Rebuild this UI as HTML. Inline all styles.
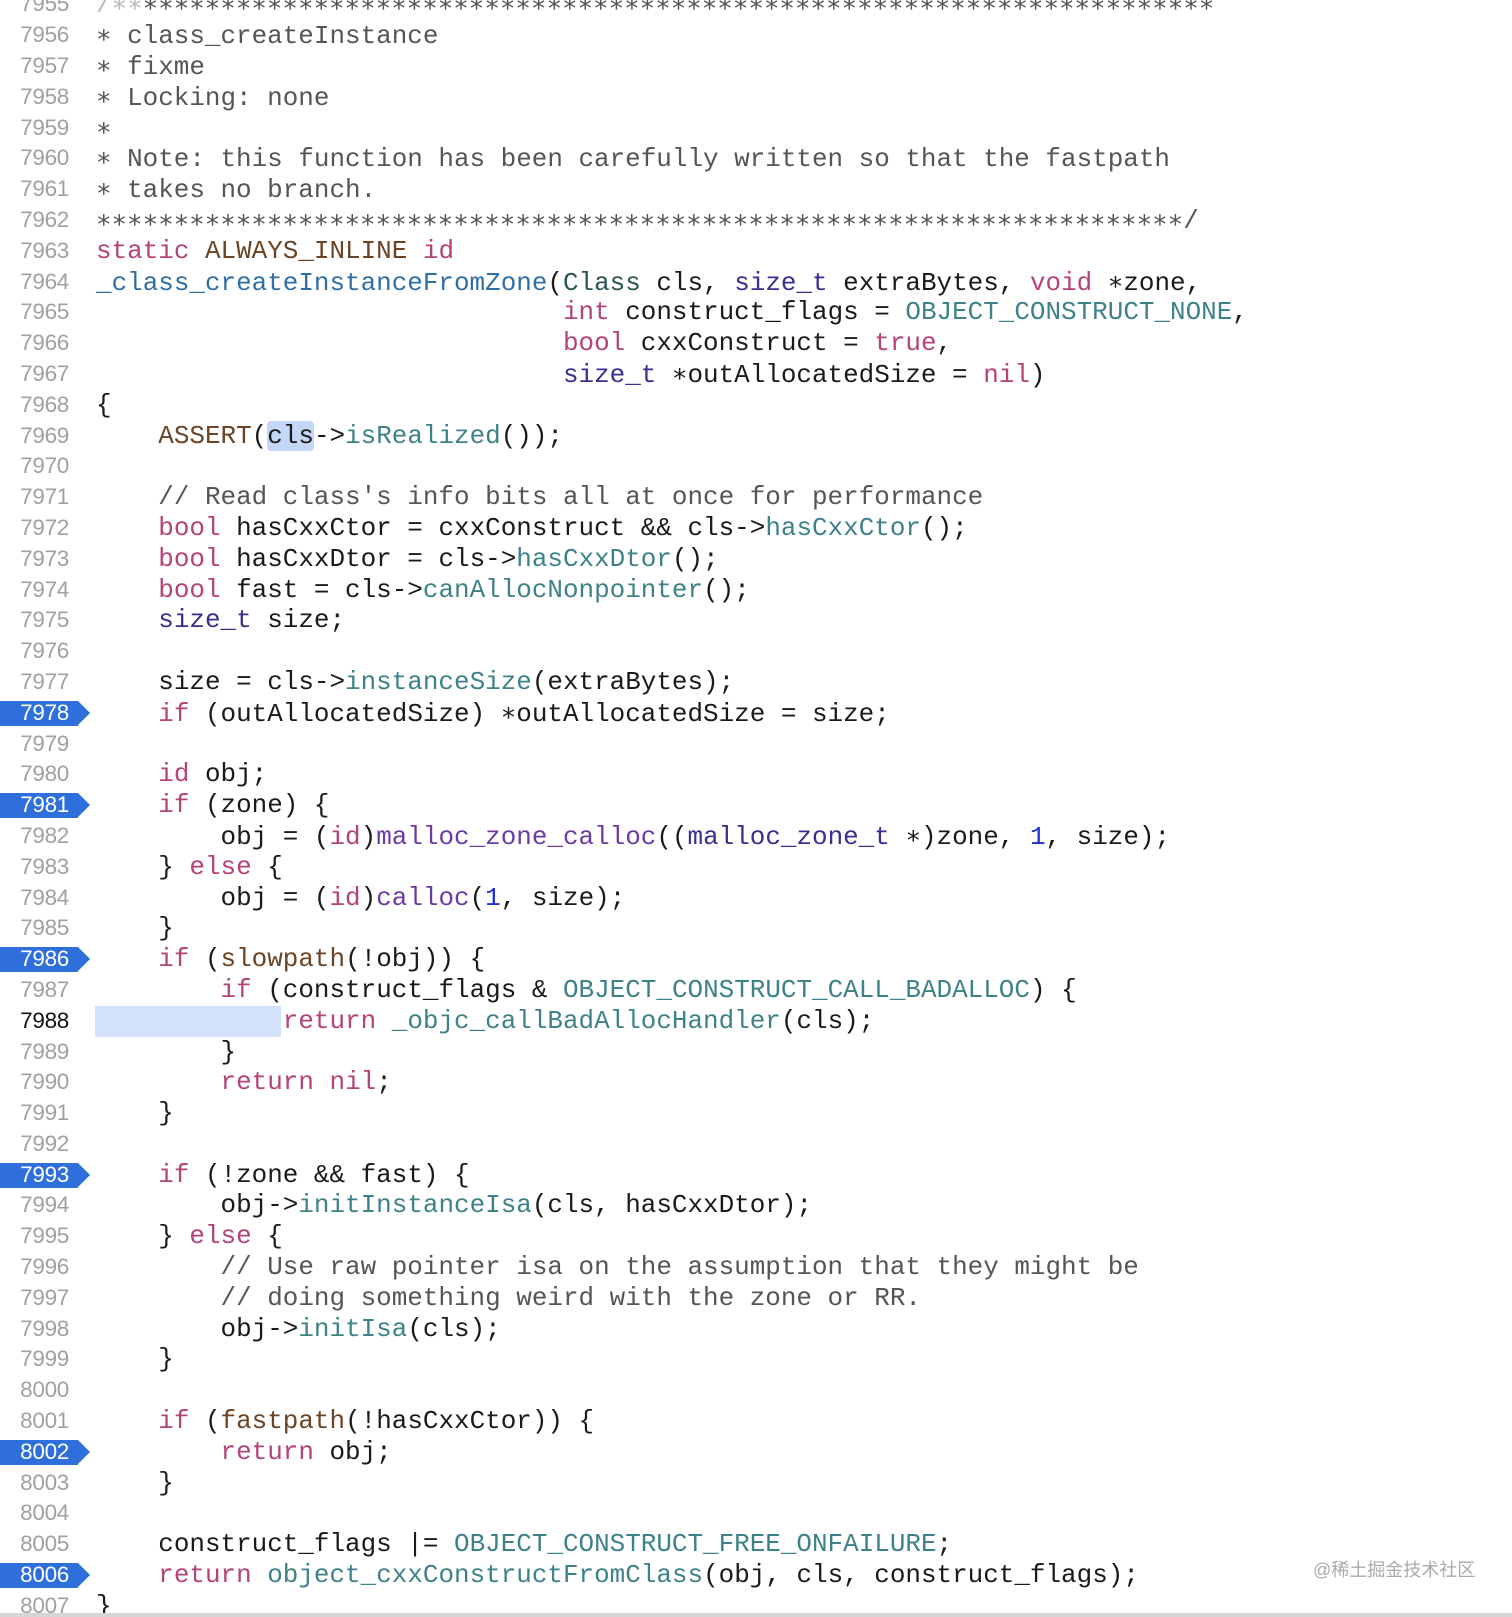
<!DOCTYPE html>
<html><head><meta charset="utf-8"><style>
html,body{margin:0;padding:0;background:#fff;width:1512px;height:1617px;overflow:hidden;position:relative}
#c{position:absolute;left:0;top:-10.6px;width:1512px}
.l{height:30.8px;position:relative;white-space:pre}
.n{position:absolute;right:1443px;top:0;line-height:30.8px;font-family:"Liberation Sans",sans-serif;font-size:22.5px;color:#a0a0a0;text-align:right;letter-spacing:-0.3px}
.n.cur{color:#111}
.bp{position:absolute;left:0;top:3px;width:78px;height:25px;background:#2f6fdc}
.bp:after{content:"";position:absolute;left:78px;top:0;border-left:12px solid #2f6fdc;border-top:12.5px solid transparent;border-bottom:12.5px solid transparent}
.bpn{position:absolute;right:1443px;top:0;line-height:30.8px;font-family:"Liberation Sans",sans-serif;font-size:22.5px;color:#fff;z-index:2;letter-spacing:-0.3px}
.t{position:absolute;left:96px;top:0;line-height:30.8px;font-family:"Liberation Mono",monospace;font-size:25.95px;color:#1a1a1a}
.s{font-family:"DejaVu Sans Mono",monospace;font-size:25.8px}
.cm{color:#555}.k{color:#b4437a}.m{color:#6b4325}.f{color:#3e8289}.d{color:#2f6fa6}.ty{color:#37308f}.cl{color:#2a5555}.p{color:#6d3aa4}.num{color:#1c2fd6}
.hl{background:#c4d7f7;border-radius:4px}
.cur-bg{position:absolute;left:95px;top:0;width:186px;height:30.8px;background:#d4e1fa}
.wm{position:absolute;left:1313px;top:1556px;font-family:"Liberation Sans","Noto Sans CJK SC",sans-serif;font-size:18px;color:#aaa}
.bot{position:absolute;left:0;top:1613px;width:1512px;height:4px;background:#d6d6d6}
</style></head><body>
<div id="c">
<div class="l"><span class="n">7955</span><span class="t cm"><span style="color:#bbb">/<span class="s">∗∗</span></span><span class="s">∗∗∗∗∗∗∗∗∗∗∗∗∗∗∗∗∗∗∗∗∗∗∗∗∗∗∗∗∗∗∗∗∗∗∗∗∗∗∗∗∗∗∗∗∗∗∗∗∗∗∗∗∗∗∗∗∗∗∗∗∗∗∗∗∗∗∗∗∗</span></span></div>
<div class="l"><span class="n">7956</span><span class="t cm"><span class="s">∗</span> class_createInstance</span></div>
<div class="l"><span class="n">7957</span><span class="t cm"><span class="s">∗</span> fixme</span></div>
<div class="l"><span class="n">7958</span><span class="t cm"><span class="s">∗</span> Locking: none</span></div>
<div class="l"><span class="n">7959</span><span class="t cm"><span class="s">∗</span></span></div>
<div class="l"><span class="n">7960</span><span class="t cm"><span class="s">∗</span> Note: this function has been carefully written so that the fastpath</span></div>
<div class="l"><span class="n">7961</span><span class="t cm"><span class="s">∗</span> takes no branch.</span></div>
<div class="l"><span class="n">7962</span><span class="t cm"><span class="s">∗∗∗∗∗∗∗∗∗∗∗∗∗∗∗∗∗∗∗∗∗∗∗∗∗∗∗∗∗∗∗∗∗∗∗∗∗∗∗∗∗∗∗∗∗∗∗∗∗∗∗∗∗∗∗∗∗∗∗∗∗∗∗∗∗∗∗∗∗∗</span>/</span></div>
<div class="l"><span class="n">7963</span><span class="t"><span class="k">static</span> <span class="m">ALWAYS_INLINE</span> <span class="k">id</span></span></div>
<div class="l"><span class="n">7964</span><span class="t"><span class="d">_class_createInstanceFromZone</span>(<span class="cl">Class</span> cls, <span class="ty">size_t</span> extraBytes, <span class="k">void</span> <span class="s">∗</span>zone,</span></div>
<div class="l"><span class="n">7965</span><span class="t">                              <span class="k">int</span> construct_flags = <span class="f">OBJECT_CONSTRUCT_NONE</span>,</span></div>
<div class="l"><span class="n">7966</span><span class="t">                              <span class="k">bool</span> cxxConstruct = <span class="k">true</span>,</span></div>
<div class="l"><span class="n">7967</span><span class="t">                              <span class="ty">size_t</span> <span class="s">∗</span>outAllocatedSize = <span class="k">nil</span>)</span></div>
<div class="l"><span class="n">7968</span><span class="t">{</span></div>
<div class="l"><span class="n">7969</span><span class="t">    <span class="m">ASSERT</span>(<span class="hl">cls</span>-&gt;<span class="f">isRealized</span>());</span></div>
<div class="l"><span class="n">7970</span></div>
<div class="l"><span class="n">7971</span><span class="t cm">    // Read class's info bits all at once for performance</span></div>
<div class="l"><span class="n">7972</span><span class="t">    <span class="k">bool</span> hasCxxCtor = cxxConstruct &amp;&amp; cls-&gt;<span class="f">hasCxxCtor</span>();</span></div>
<div class="l"><span class="n">7973</span><span class="t">    <span class="k">bool</span> hasCxxDtor = cls-&gt;<span class="f">hasCxxDtor</span>();</span></div>
<div class="l"><span class="n">7974</span><span class="t">    <span class="k">bool</span> fast = cls-&gt;<span class="f">canAllocNonpointer</span>();</span></div>
<div class="l"><span class="n">7975</span><span class="t">    <span class="ty">size_t</span> size;</span></div>
<div class="l"><span class="n">7976</span></div>
<div class="l"><span class="n">7977</span><span class="t">    size = cls-&gt;<span class="f">instanceSize</span>(extraBytes);</span></div>
<div class="l"><span class="bp"></span><span class="bpn">7978</span><span class="t">    <span class="k">if</span> (outAllocatedSize) <span class="s">∗</span>outAllocatedSize = size;</span></div>
<div class="l"><span class="n">7979</span></div>
<div class="l"><span class="n">7980</span><span class="t">    <span class="k">id</span> obj;</span></div>
<div class="l"><span class="bp"></span><span class="bpn">7981</span><span class="t">    <span class="k">if</span> (zone) {</span></div>
<div class="l"><span class="n">7982</span><span class="t">        obj = (<span class="k">id</span>)<span class="p">malloc_zone_calloc</span>((<span class="ty">malloc_zone_t</span> <span class="s">∗</span>)zone, <span class="num">1</span>, size);</span></div>
<div class="l"><span class="n">7983</span><span class="t">    } <span class="k">else</span> {</span></div>
<div class="l"><span class="n">7984</span><span class="t">        obj = (<span class="k">id</span>)<span class="p">calloc</span>(<span class="num">1</span>, size);</span></div>
<div class="l"><span class="n">7985</span><span class="t">    }</span></div>
<div class="l"><span class="bp"></span><span class="bpn">7986</span><span class="t">    <span class="k">if</span> (<span class="m">slowpath</span>(!obj)) {</span></div>
<div class="l"><span class="n">7987</span><span class="t">        <span class="k">if</span> (construct_flags &amp; <span class="f">OBJECT_CONSTRUCT_CALL_BADALLOC</span>) {</span></div>
<div class="l"><span class="cur-bg"></span><span class="n cur">7988</span><span class="t">            <span class="k">return</span> <span class="f">_objc_callBadAllocHandler</span>(cls);</span></div>
<div class="l"><span class="n">7989</span><span class="t">        }</span></div>
<div class="l"><span class="n">7990</span><span class="t">        <span class="k">return</span> <span class="k">nil</span>;</span></div>
<div class="l"><span class="n">7991</span><span class="t">    }</span></div>
<div class="l"><span class="n">7992</span></div>
<div class="l"><span class="bp"></span><span class="bpn">7993</span><span class="t">    <span class="k">if</span> (!zone &amp;&amp; fast) {</span></div>
<div class="l"><span class="n">7994</span><span class="t">        obj-&gt;<span class="f">initInstanceIsa</span>(cls, hasCxxDtor);</span></div>
<div class="l"><span class="n">7995</span><span class="t">    } <span class="k">else</span> {</span></div>
<div class="l"><span class="n">7996</span><span class="t cm">        // Use raw pointer isa on the assumption that they might be</span></div>
<div class="l"><span class="n">7997</span><span class="t cm">        // doing something weird with the zone or RR.</span></div>
<div class="l"><span class="n">7998</span><span class="t">        obj-&gt;<span class="f">initIsa</span>(cls);</span></div>
<div class="l"><span class="n">7999</span><span class="t">    }</span></div>
<div class="l"><span class="n">8000</span></div>
<div class="l"><span class="n">8001</span><span class="t">    <span class="k">if</span> (<span class="m">fastpath</span>(!hasCxxCtor)) {</span></div>
<div class="l"><span class="bp"></span><span class="bpn">8002</span><span class="t">        <span class="k">return</span> obj;</span></div>
<div class="l"><span class="n">8003</span><span class="t">    }</span></div>
<div class="l"><span class="n">8004</span></div>
<div class="l"><span class="n">8005</span><span class="t">    construct_flags |= <span class="f">OBJECT_CONSTRUCT_FREE_ONFAILURE</span>;</span></div>
<div class="l"><span class="bp"></span><span class="bpn">8006</span><span class="t">    <span class="k">return</span> <span class="f">object_cxxConstructFromClass</span>(obj, cls, construct_flags);</span></div>
<div class="l"><span class="n">8007</span><span class="t">}</span></div>
</div>
<div class="wm">@稀土掘金技术社区</div>
<div class="bot"></div>
</body></html>
